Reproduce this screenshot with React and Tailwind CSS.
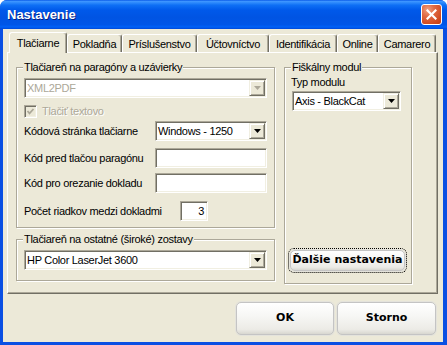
import React from "react";

const sunken =
  "border border-t-[#aca899] border-l-[#aca899] border-r-white border-b-white shadow-[inset_1px_1px_0_#716f64,inset_-1px_-1px_0_#f1efe2]";

function Arrow({ disabled }) {
  return (
    <div className="m-[1px] flex h-[16px] w-[16px] shrink-0 items-center justify-center border border-t-[#f1efe2] border-l-[#f1efe2] border-r-[#716f64] border-b-[#716f64] bg-[#ece9d8] shadow-[inset_1px_1px_0_#fff,inset_-1px_-1px_0_#aca899]">
      <svg width="7" height="4" viewBox="0 0 7 4">
        <polygon points="0,0 7,0 3.5,4" fill={disabled ? "#aca899" : "#000"} />
      </svg>
    </div>
  );
}

function Combo({ value, className, disabled }) {
  return (
    <div className={`flex h-[20px] items-center bg-white ${sunken} ${className}`}>
      <div className={`flex-1 pl-[2px] leading-[13px] ${disabled ? "text-[#aca899]" : "text-black"}`}>{value}</div>
      <Arrow disabled={disabled} />
    </div>
  );
}

function Input({ className, value, alignRight }) {
  return (
    <div className={`flex h-[20px] items-center bg-white px-[3px] ${sunken} ${className} ${alignRight ? "justify-end" : ""}`}>
      {value}
    </div>
  );
}

function Group({ legend, className, children }) {
  return (
    <div className={`relative border border-[#aca899] shadow-[inset_1px_1px_0_#fff,1px_1px_0_#fff] ${className}`}>
      <div className="absolute left-[6px] top-[-7px] bg-[#ece9d8] px-[1px] leading-[13px]">{legend}</div>
      {children}
    </div>
  );
}

function Tab({ label, w, selected }) {
  if (selected) {
    return (
      <div className={`relative z-10 -mb-px flex h-[21px] items-center justify-center rounded-t-[3px] border-l border-r border-t border-l-white border-r-[#716f64] border-t-white bg-[#ece9d8] shadow-[inset_-1px_0_0_#aca899] ${w}`}>
        {label}
      </div>
    );
  }
  return (
    <div className={`flex h-[18px] items-center justify-center rounded-t-[3px] border-l border-r border-t border-l-white border-r-[#716f64] border-t-white bg-[#ece9d8] pt-[1px] shadow-[inset_-1px_0_0_#aca899] ${w}`}>
      {label}
    </div>
  );
}

function XPButton({ children, className }) {
  return (
    <div className={`flex items-center justify-center rounded-[5px] border border-[#c4c4c4] bg-[linear-gradient(to_bottom,#ffffff_0%,#f7f7f5_40%,#ecebe6_85%,#d8d7d0_100%)] shadow-[0_0_0_1px_#e4e3dc] font-['DejaVu_Sans',sans-serif] text-[11px] font-bold tracking-normal text-black ${className}`}>
      {children}
    </div>
  );
}

export default function App() {
  return (
    <div className="flex h-[345px] w-[447px] flex-col overflow-hidden rounded-t-[7px] bg-[#0a4fe3] font-['Liberation_Sans',Arial,sans-serif] text-[11px] tracking-[-0.3px] text-black">
      {/* Title bar */}
      <div className="flex h-[29px] shrink-0 items-center bg-[linear-gradient(to_bottom,#0a5ae8_0%,#3d95ff_5%,#2a88fb_10%,#0e6ff5_18%,#0059ea_35%,#0054e3_60%,#0056e8_85%,#0062f8_93%,#0048d8_100%)] pl-[7px] pr-[5px]">
        <div className="flex-1 pt-[1px] text-[13px] font-bold tracking-normal text-white [text-shadow:1px_1px_0_#0a1e80]">Nastavenie</div>
        <div className="flex h-[21px] w-[21px] items-center justify-center rounded-[3px] border border-white bg-[radial-gradient(circle_at_30%_25%,#f0a080_0%,#e06a44_35%,#d04a20_75%,#c03c12_100%)]">
          <svg width="11" height="11" viewBox="0 0 11 11">
            <path d="M1.5 1.5 L9.5 9.5 M9.5 1.5 L1.5 9.5" stroke="#fff" strokeWidth="2.2" strokeLinecap="square" />
          </svg>
        </div>
      </div>

      {/* Client area with frame borders */}
      <div className="ml-[3px] mr-[4px] mb-[3px] flex flex-1 flex-col bg-[#ece9d8]">
        {/* Tabs */}
        <div className="mt-[3px] flex h-[20px] items-end pl-[6px]">
          <Tab label="Tlačiarne" w="w-[58px]" selected />
          <Tab label="Pokladňa" w="w-[55px]" />
          <Tab label="Príslušenstvo" w="w-[75px]" />
          <Tab label="Účtovníctvo" w="w-[72px]" />
          <Tab label="Identifikácia" w="w-[68px]" />
          <Tab label="Online" w="w-[41px]" />
          <Tab label="Camarero" w="w-[58px]" />
        </div>

        {/* Tab panel */}
        <div className="ml-[4px] flex h-[242px] w-[431px] border border-b-[#716f64] border-l-white border-r-[#716f64] border-t-white pl-[8px] pt-[14px] shadow-[inset_-1px_-1px_0_#aca899]">
          {/* Left column */}
          <div className="flex w-[259px] flex-col">
            <Group legend="Tlačiareň na paragóny a uzávierky" className="h-[161px]">
              <div className="flex flex-col pl-[7px] pt-[10px]">
                <Combo value="XML2PDF" className="w-[243px]" disabled />
                <div className="mt-[7px] flex h-[13px] items-center">
                  <div className={`flex h-[13px] w-[13px] items-center justify-center bg-[#ece9d8] ${sunken}`}>
                    <svg width="9" height="9" viewBox="0 0 9 9">
                      <polyline points="1.5,4 3.5,6.3 7.5,2" fill="none" stroke="#aca899" strokeWidth="1.8" />
                    </svg>
                  </div>
                  <span className="ml-[5px] text-[#aca899] [text-shadow:1px_1px_0_#fff]">Tlačiť textovo</span>
                </div>
                <div className="mt-[3px] flex w-[243px] items-center justify-between">
                  <span>Kódová stránka tlačiarne</span>
                  <Combo value="Windows - 1250" className="w-[112px]" />
                </div>
                <div className="mt-[7px] flex w-[243px] items-center justify-between">
                  <span>Kód pred tlačou paragónu</span>
                  <Input className="w-[112px]" />
                </div>
                <div className="mt-[5px] flex w-[243px] items-center justify-between">
                  <span>Kód pro orezanie dokladu</span>
                  <Input className="w-[112px]" />
                </div>
                <div className="mt-[8px] flex w-[243px] items-center">
                  <span className="w-[156px]">Počet riadkov medzi dokladmi</span>
                  <Input className="w-[28px]" value="3" alignRight />
                </div>
              </div>
            </Group>
            <Group legend="Tlačiareň na ostatné (široké) zostavy" className="mt-[11px] h-[42px]">
              <div className="pl-[7px] pt-[10px]">
                <Combo value="HP Color LaserJet 3600" className="w-[243px]" />
              </div>
            </Group>
          </div>

          {/* Right column */}
          <Group legend="Fiškálny modul" className="ml-[9px] flex h-[217px] w-[128px] flex-col">
            <div className="ml-[6px] mt-[7px] h-[14px] leading-[14px]">Typ modulu</div>
            <Combo value="Axis - BlackCat" className="ml-[7px] mt-[2px] w-[109px]" />
            <div className="ml-[3px] mt-auto mb-[10px] h-[25px] w-[119px] rounded-[6px] border border-dotted border-black p-[1px]">
              <XPButton className="h-full w-full">Ďalšie nastavenia</XPButton>
            </div>
          </Group>
        </div>

        {/* Bottom buttons */}
        <div className="mt-[8px] flex justify-end gap-[3px] pr-[7px]">
          <XPButton className="h-[33px] w-[98px]">OK</XPButton>
          <XPButton className="h-[33px] w-[99px]">Storno</XPButton>
        </div>
      </div>
    </div>
  );
}
